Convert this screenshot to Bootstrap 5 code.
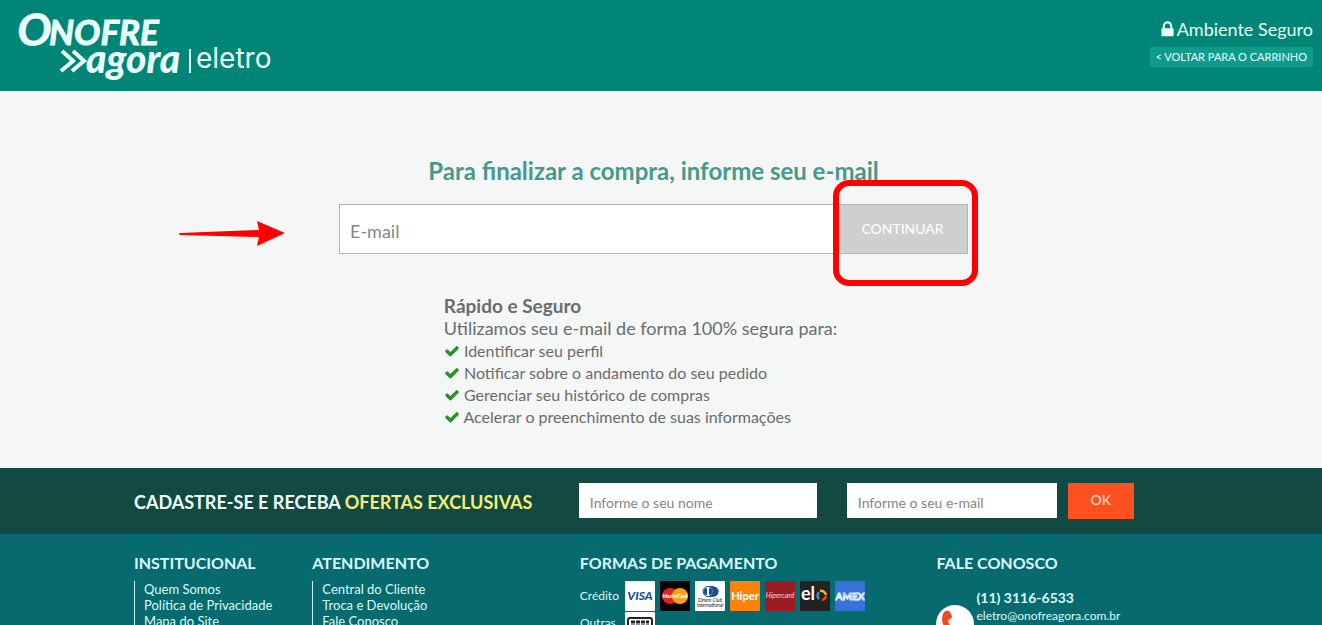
<!DOCTYPE html>
<html lang="pt-BR">
<head>
<meta charset="utf-8">
<meta name="viewport" content="width=device-width, initial-scale=1">
<title>Onofre Agora Eletro</title>
<link href="https://cdn.jsdelivr.net/npm/bootstrap@5.3.0/dist/css/bootstrap.min.css" rel="stylesheet">
<style>
body{font-family:Lato,sans-serif;background:#f5f7f6;color:#6a6c6b;font-size:16px;line-height:22px}
a{text-decoration:none;color:inherit}
.topbar{background:#008577;height:91px;padding:0 9px 0 16px;color:#e8fffb}
.brand{width:264px;height:80px;margin-top:6px;fill:#e8fffb}
.secure{font-size:18px;line-height:24px;padding-top:17px}
.secure svg{width:19px;height:19px;fill:currentColor;vertical-align:-3px}
.back{background:#0f9b89;font-size:11px;line-height:14px;padding:3px 6px;border-radius:2px;margin-top:6px}
.checkout{padding:64px 15px 40px 0}
.checkout-box{max-width:629px}
.title{color:#459a8c;font-size:24px;line-height:32px;margin-bottom:17px}
.mail{height:50px;border:1px solid #b4b4b4;border-radius:0;font-size:18px;padding:4px 10px 0}
.mail::placeholder,.news::placeholder{color:#858585;opacity:1}
.go{width:134px;height:50px;background:#cfcfcf;border:1px solid #b4b4b4;border-left:0;border-radius:0;color:#fff;font-size:14px;padding:0 0 2px 4px}
.go:hover{background:#c4c4c4;color:#fff}
.ring{inset:-24px -10px -32px -1px;border:6px solid #f00;border-radius:16px;pointer-events:none}
.arrow{width:108px;height:26px;right:100%;margin-right:53px;top:16px}
.perks{margin-top:41px}
.perks h2{font-size:19px;line-height:22px}
.perks p{font-size:18px;line-height:22px}
.perks ul{padding-top:1px}
.perks svg{width:16px;height:16px;fill:#2f8f2f;vertical-align:-2px}
.band{background:#124a43;height:66px}
.wrap{max-width:1070px}
.pad{padding:0 8px}
.band h2{font-size:18px;line-height:24px;padding-top:2px;color:#f0fffc}
.band h2 span{color:#f4ee76}
.band form{padding-left:7px}
.news{height:35px;border:0;border-radius:0;font-size:14px;padding:4px 11px 0}
.n-name{width:238px}
.n-mail{width:210px;margin:0 11px 0 30px}
.ok{width:66px;height:36px;background:#ff5022;border:0;border-radius:0;color:#ffe4da;font-size:14px;line-height:20px;padding:0 0 2px}
.foot{background:#066a6e;color:#dcfafa;font-size:13px;line-height:16px;padding-top:19px;min-height:0}
.foot h3{font-size:16px;line-height:20px;margin-bottom:8px}
.links{border-left:1px solid #cdeeee;padding-left:9px}
.pay-label{width:36px;font-size:12px}
.cards{gap:5px}
.cards svg{width:30px;height:30px}
.phone{width:38px;height:38px;margin-top:16px}
.tel{font-size:14px;line-height:18px}
.mailto{font-size:12px}
.reach{margin-left:2px}
</style>
</head>
<body class="vh-100 overflow-hidden d-flex flex-column">
<svg class="d-none">
<symbol id="check" viewBox="0 0 1792 1792"><path d="M1671 566q0 40-28 68l-724 724-136 136q-28 28-68 28t-68-28l-136-136-362-362q-28-28-28-68t28-68l136-136q28-28 68-28t68 28l294 295 656-657q28-28 68-28t68 28l136 136q28 28 28 68z"/></symbol>
</svg>
<header class="topbar d-flex justify-content-between align-items-start flex-shrink-0">
<a href="#" aria-label="Onofre Agora Eletro"><svg class="brand" viewBox="0 0 264 80" font-family="Lato,sans-serif">
<text x="1" y="40" font-size="46" font-weight="900" font-style="italic">O</text>
<text x="33" y="39" font-size="35" font-weight="700" stroke="#e8fffb" font-style="italic">NOFRE</text>
<path d="M46 45l11 10-12 10M57 45l11 10-12 10" fill="none" stroke="#e8fffb" stroke-width="4"/>
<text x="70" y="67" font-size="39" font-weight="900" font-style="italic">agora</text>
<path d="M173 43h2v24h-2z"/>
<text x="180" y="62" font-size="28" font-family="Inter,sans-serif">eletro</text>
</svg></a>
<div class="d-flex flex-column align-items-end">
<div class="secure"><svg viewBox="0 0 1792 1792"><path d="M640 768h512v-192q0-106-75-181t-181-75-181 75-75 181v192zm832 96v576q0 40-28 68t-68 28h-960q-40 0-68-28t-28-68v-576q0-40 28-68t68-28h32v-192q0-184 132-316t316-132 316 132 132 316v192h32q40 0 68 28t28 68z"/></svg><span>Ambiente Seguro</span></div>
<a class="back" href="#">&lt; VOLTAR PARA O CARRINHO</a>
</div>
</header>
<main class="checkout flex-shrink-0">
<div class="checkout-box mx-auto">
<h1 class="title text-center fw-bold">Para finalizar a compra, informe seu e-mail</h1>
<form class="d-flex position-relative">
<svg class="arrow position-absolute" viewBox="0 0 108 26"><path d="M2 13L81 10 79 1 107 13 79 26 81 17 2 15Q0 14 2 13z" fill="#f00"/></svg>
<input class="form-control mail" type="email" placeholder="E-mail" aria-label="E-mail">
<div class="position-relative"><button class="btn go" type="button">CONTINUAR</button><div class="ring position-absolute"></div></div>
</form>
<section class="perks row g-0"><div class="col-10 offset-2">
<h2 class="fw-bold mb-0">Rápido e Seguro</h2>
<p class="mb-0">Utilizamos seu e-mail de forma 100% segura para:</p>
<ul class="list-unstyled mb-0">
<li><svg><use href="#check"/></svg> Identificar seu perfil</li>
<li><svg><use href="#check"/></svg> Notificar sobre o andamento do seu pedido</li>
<li><svg><use href="#check"/></svg> Gerenciar seu histórico de compras</li>
<li><svg><use href="#check"/></svg> Acelerar o preenchimento de suas informações</li>
</ul></div></section>
</div>
</main>
<section class="band flex-shrink-0"><div class="wrap row g-0 mx-auto h-100 align-items-center">
<h2 class="col-5 px-2 fw-bold mb-0">CADASTRE-SE E RECEBA <span>OFERTAS EXCLUSIVAS</span></h2>
<form class="col-7 d-flex">
<input class="form-control news n-name" type="text" placeholder="Informe o seu nome" aria-label="Nome">
<input class="form-control news n-mail" type="email" placeholder="Informe o seu e-mail" aria-label="E-mail">
<button class="btn ok" type="button">OK</button>
</form></div></section>
<footer class="foot flex-grow-1 overflow-hidden"><div class="wrap row g-0 mx-auto">
<div class="col-2 pad"><h3 class="fw-bold">INSTITUCIONAL</h3>
<ul class="links list-unstyled"><li><a href="#">Quem Somos</a></li><li><a href="#">Política de Privacidade</a></li><li><a href="#">Mapa do Site</a></li></ul></div>
<div class="col-3 pad"><h3 class="fw-bold">ATENDIMENTO</h3>
<ul class="links list-unstyled"><li><a href="#">Central do Cliente</a></li><li><a href="#">Troca e Devolução</a></li><li><a href="#">Fale Conosco</a></li></ul></div>
<div class="col-4 pad"><h3 class="fw-bold">FORMAS DE PAGAMENTO</h3>
<div class="d-flex align-items-center cards"><span class="pay-label me-1">Crédito</span>
<svg viewBox="0 0 30 30"><rect width="30" height="30" rx="1" fill="#fff"/><text x="15" y="19" font-size="12" font-weight="900" font-style="italic" text-anchor="middle" fill="#1b4f94">VISA</text></svg>
<svg viewBox="0 0 30 30"><rect width="30" height="30" rx="1" fill="#050505"/><circle cx="10" cy="15" r="8" fill="#e2231a"/><circle cx="20" cy="15" r="8" fill="#f9a11b"/><text x="15" y="17" font-size="5" font-weight="900" font-style="italic" text-anchor="middle" fill="#fff">MasterCard</text></svg>
<svg viewBox="0 0 30 30"><rect width="30" height="30" rx="1" fill="#fff"/><path d="M13 5h4a6 5 0 0 1 0 11h-4z" fill="#1b4f94"/><circle cx="13" cy="10.500" r="5" fill="#fff" stroke="#1b4f94"/><path d="M12 7a3 3 0 0 0 0 7zM14 7a3 3 0 0 1 0 7z" fill="#1b4f94"/><text font-size="5" font-style="italic" text-anchor="middle" fill="#222"><tspan x="15" y="21">Diners Club</tspan><tspan x="15" y="26">International</tspan></text></svg>
<svg viewBox="0 0 30 30"><rect width="30" height="30" rx="1" fill="#ff8208"/><text x="15" y="19" font-size="11" font-weight="900" text-anchor="middle" fill="#fff">Hiper</text></svg>
<svg viewBox="0 0 30 30"><rect width="30" height="30" rx="1" fill="#9d1c22"/><text x="15" y="17" font-size="7" font-style="italic" text-anchor="middle" fill="#f6d5d5">Hipercard</text></svg>
<svg viewBox="0 0 30 30"><rect width="30" height="30" rx="1" fill="#222"/><text x="1" y="19" font-size="18" font-weight="700" fill="#fff">el</text><g fill="none" stroke-width="2.500"><path d="M19 18a5 5 0 0 1 0-7" stroke="#2b9bd8"/><path d="M20 10a5 5 0 0 1 6 4" stroke="#f7b718"/><path d="M26 15a5 5 0 0 1-4 4" stroke="#e8452c"/></g></svg>
<svg viewBox="0 0 30 30"><rect width="30" height="30" fill="#3674dc"/><text x="15" y="19" font-size="10" font-weight="700" text-anchor="middle" fill="#3674dc" stroke="#e4f0ff">AMEX</text></svg>
</div>
<div class="d-flex cards align-items-start"><span class="pay-label me-1 pt-1 text-end">Outras</span>
<svg viewBox="0 0 30 30"><rect width="30" height="30" y="1" rx="1" fill="#fff"/><rect x="3" y="7" width="24" height="18" rx="2" fill="#fff" stroke="#222" stroke-width="2"/><path d="M6 11h18M6 15h18" stroke="#222" stroke-width="3" stroke-dasharray="4 1"/></svg></div>
</div>
<div class="col-3 pad"><h3 class="fw-bold mb-3">FALE CONOSCO</h3>
<div class="d-flex"><svg class="phone" viewBox="0 0 38 38"><circle cx="19" cy="19" r="19" fill="#fff"/><path d="M8 7q4-3 6 0l2 4q0 3-4 4 1 7 10 12 3-4 6-2l3 3q1 3-4 4-9 1-17-8-7-9-2-17z" fill="#f04b22"/></svg>
<div class="reach"><div class="tel fw-bold">(11) 3116-6533</div><a class="mailto" href="#">eletro@onofreagora.com.br</a></div></div></div>
</div></footer>
<script src="https://cdn.jsdelivr.net/npm/bootstrap@5.3.0/dist/js/bootstrap.bundle.min.js"></script>
</body>
</html>
